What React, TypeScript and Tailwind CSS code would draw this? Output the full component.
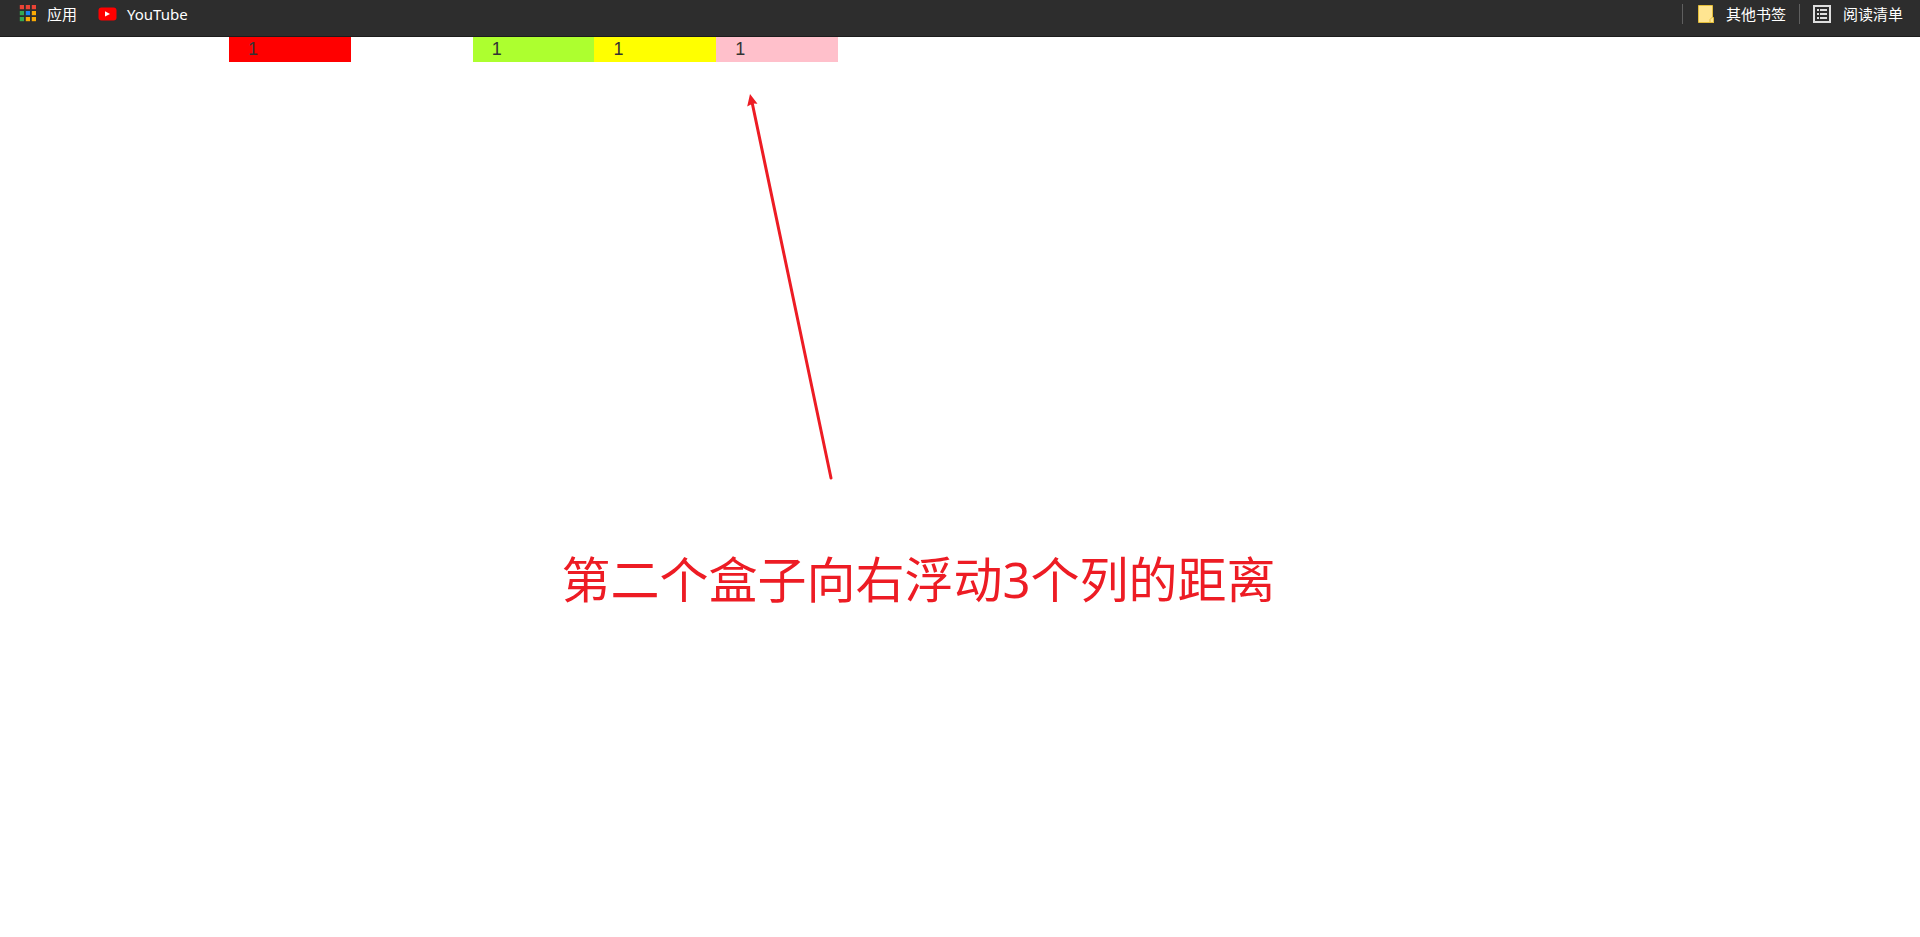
import React from "react";

const appDots = [
  { x: 0, y: 0, fill: "#ea4335" },
  { x: 6, y: 0, fill: "#ea4335" },
  { x: 12, y: 0, fill: "#ea4335" },
  { x: 0, y: 6, fill: "#34a853" },
  { x: 6, y: 6, fill: "#1a84f5" },
  { x: 12, y: 6, fill: "#fbab05" },
  { x: 0, y: 12, fill: "#34a853" },
  { x: 6, y: 12, fill: "#fbab05" },
  { x: 12, y: 12, fill: "#fbab05" },
];

function AppsIcon() {
  return (
    <svg width="18" height="18" viewBox="0 0 18 18" aria-hidden="true">
      {appDots.map((d) => (
        <rect key={`${d.x}-${d.y}`} x={d.x + 0.8} y={d.y} width="4.2" height="4.2" fill={d.fill} />
      ))}
    </svg>
  );
}

function YouTubeIcon() {
  return (
    <svg width="19" height="14" viewBox="0 0 19 14" aria-hidden="true">
      <rect x="0.5" y="0.5" width="18" height="13" rx="3" fill="#ff0000" />
      <path d="M7 4.2v5.4l5-2.7z" fill="#fff" />
    </svg>
  );
}

function FolderIcon() {
  return (
    <svg width="16" height="18" viewBox="0 0 16 18" aria-hidden="true">
      <path d="M0.5 0.5h14v11.5l1 1v4.5H0.5z" fill="#ffe591" stroke="#e3bd3a" />
      <path d="M12 17.5v-3l2.5-2.5 1 1v4.5z" fill="#ffe591" stroke="#e3bd3a" />
    </svg>
  );
}

function ReadingListIcon() {
  return (
    <svg width="18" height="18" viewBox="0 0 18 18" aria-hidden="true">
      <rect x="1" y="1" width="16" height="16" fill="none" stroke="#dedede" strokeWidth="2" />
      <path d="M4 5h2M4 9h2M4 13h2M7 5h7M7 9h7M7 13h7" stroke="#dedede" strokeWidth="1.8" />
    </svg>
  );
}

function Bookmark({ href, icon, label, gap }: { href: string; icon: React.ReactNode; label: string; gap: string }) {
  return (
    <a href={href} className={`flex items-center ${gap}`}>
      {icon}
      <span>{label}</span>
    </a>
  );
}

const columns = [
  { id: "first", style: "bg-[#ff0000]" },
  { id: "second", style: "col-start-3 bg-[#adff2f]" },
  { id: "third", style: "bg-[#ffff00]" },
  { id: "fourth", style: "bg-[#ffc0cb]" },
];

export default function App() {
  return (
    <div className="min-h-screen bg-white">
      <header className="flex h-[37px] items-start justify-between border-b border-[#1c1c1c] bg-[#2d2d2d] pr-[17px] pl-[19px] font-['Noto_Sans','Noto_Sans_CJK_SC',sans-serif] text-[15px] leading-7 text-white">
        <nav className="flex items-center gap-[21px]">
          <Bookmark href="#apps" icon={<AppsIcon />} label="应用" gap="gap-2.5" />
          <Bookmark href="#youtube" icon={<YouTubeIcon />} label="YouTube" gap="gap-2.5" />
        </nav>
        <nav className="flex items-center">
          <span className="mr-[15px] h-5 w-px bg-[#5f5f5f]" />
          <Bookmark href="#others" icon={<FolderIcon />} label="其他书签" gap="gap-3" />
          <span className="mx-[13px] h-5 w-px bg-[#5f5f5f]" />
          <Bookmark href="#reading" icon={<ReadingListIcon />} label="阅读清单" gap="gap-3" />
        </nav>
      </header>

      <main>
        <div className="mx-auto grid w-[76.15%] grid-cols-12 font-['Liberation_Sans',Arial,sans-serif] text-lg leading-[25px] text-[#333333]">
          {columns.map((c) => (
            <div key={c.id} className={`pl-[19px] ${c.style}`}>
              1
            </div>
          ))}
        </div>

        <figure className="pt-8">
          <svg className="ml-[38.75%]" width="90" height="386" viewBox="0 0 90 386" aria-hidden="true">
            <path d="M8 8L87 384" stroke="#ed1c24" strokeWidth="3" strokeLinecap="round" />
            <path d="M6 0L13.5 9.8L9 9.6L3.2 12.4z" fill="#ed1c24" />
          </svg>
          <figcaption className="ml-[29.25%] pt-[63px] font-['Noto_Sans','Noto_Sans_CJK_SC',sans-serif] text-[49px] leading-[72px] whitespace-nowrap text-[#ed1c24]">
            第二个盒子向右浮动3个列的距离
          </figcaption>
        </figure>
      </main>
    </div>
  );
}
